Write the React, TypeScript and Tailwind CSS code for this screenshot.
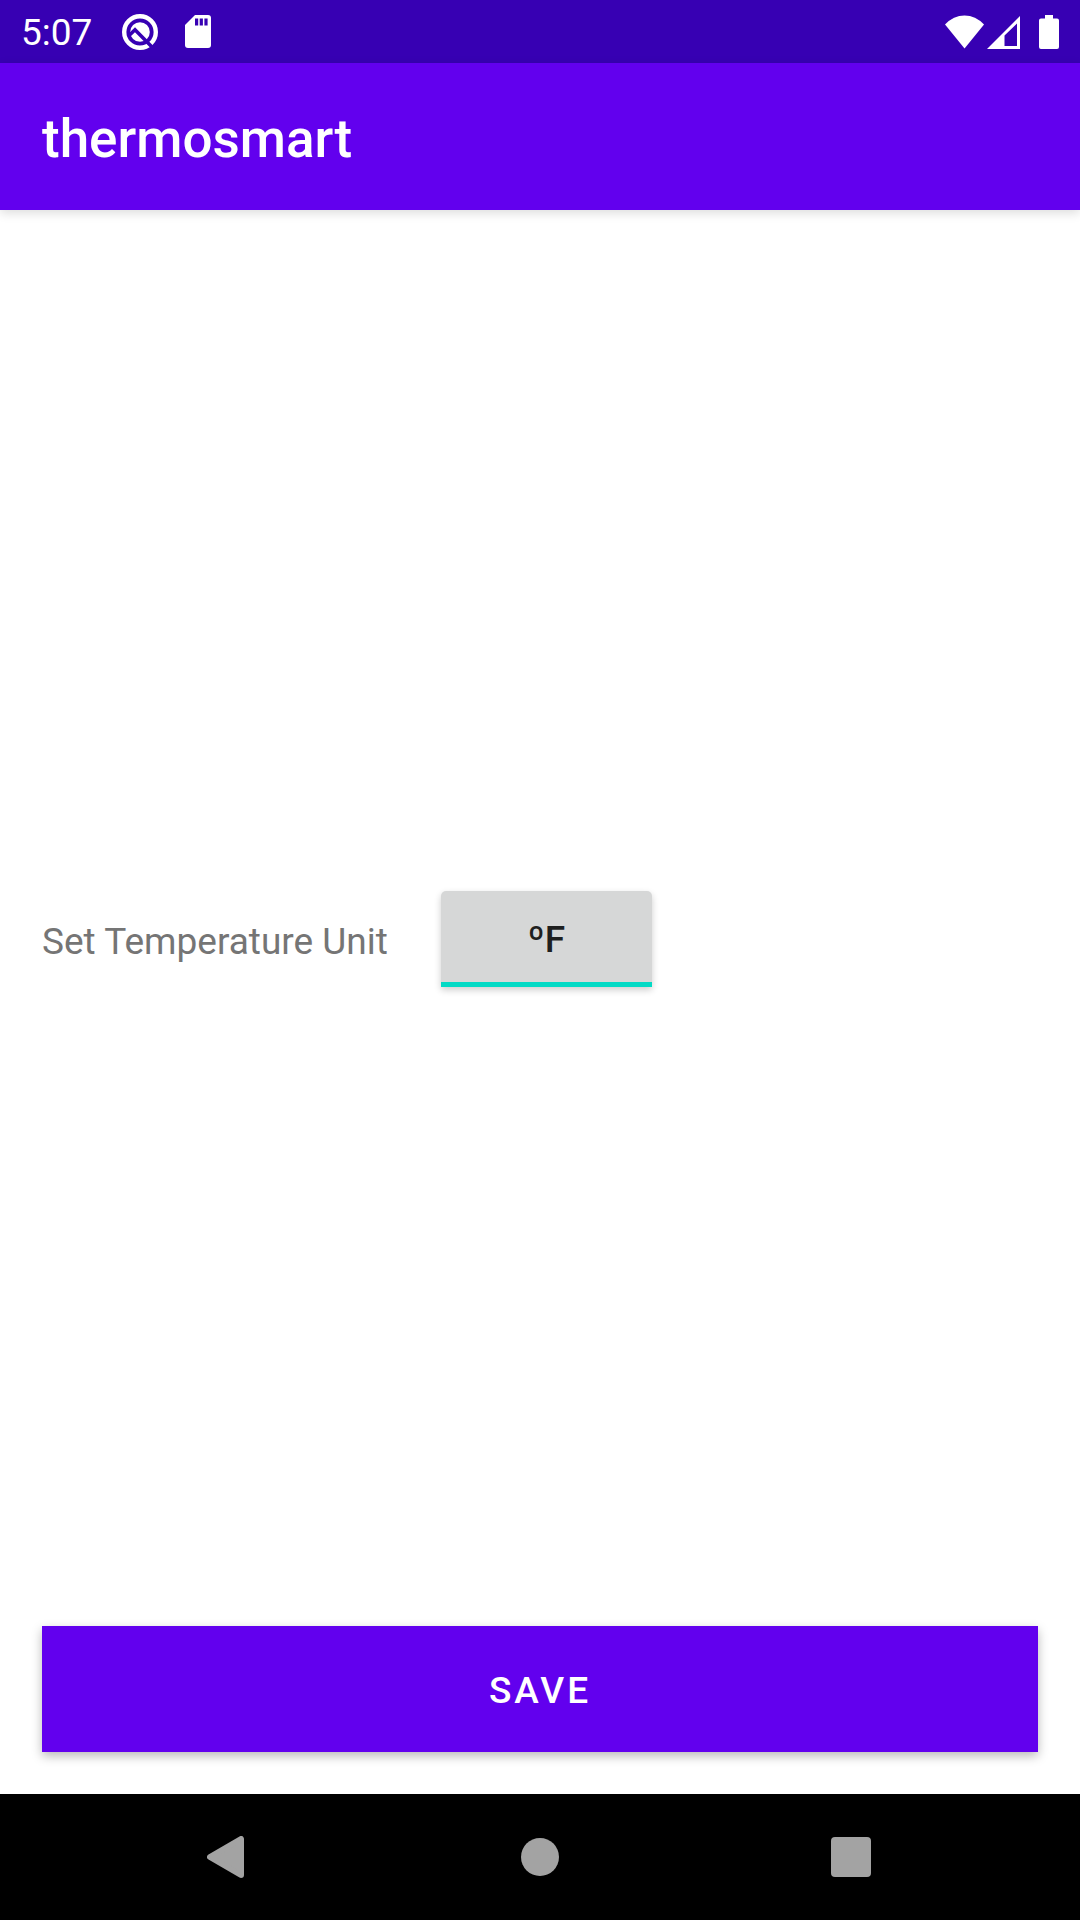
import React from "react";

function StatusBar() {
  return (
    <header className="flex h-[63px] items-center bg-[#3700b3] pl-[21px] pr-[21px] text-white">
      <time className="pt-[3px] text-[37px] leading-[44px]">5:07</time>
      <svg className="ml-[30px] h-9 w-9" viewBox="0 0 36 36" aria-hidden="true">
        <circle cx="18" cy="18" r="15.8" fill="none" stroke="white" strokeWidth="4.4" />
        <circle cx="18" cy="18" r="9.8" fill="white" />
        <path d="M6 22.5 L13 15.8 L30 33" fill="none" stroke="#3700b3" strokeWidth="3.6" />
      </svg>
      <svg className="ml-[27px] h-[33px] w-[26px]" viewBox="0 0 26 33" aria-hidden="true">
        <path d="M10 0H23Q26 0 26 3V30Q26 33 23 33H3Q0 33 0 30V10Z" fill="white" />
        <path d="M10 3.500h3.200v7H10zM14.700 3.500h3.200v7h-3.200zM19.400 3.500h3.200v7h-3.200z" fill="#3700b3" />
      </svg>
      <div className="ml-auto flex items-center">
        <svg className="h-[34px] w-[39px]" viewBox="0 0 39 34" aria-hidden="true">
          <path d="M0 9.500Q8.500 0.500 19.500 0.500T39 9.500L19.500 33.500Z" fill="white" />
        </svg>
        <svg className="ml-[3px] h-[34px] w-[33px]" viewBox="0 0 33 34" aria-hidden="true">
          <path fillRule="evenodd" d="M33 1V34H0ZM30 8.500L17.500 20.500V31H30Z" fill="white" />
        </svg>
        <svg className="ml-[19px] h-[34px] w-5" viewBox="0 0 20 34" aria-hidden="true">
          <path d="M6 0h8v3.500h4q2 0 2 2V32q0 2-2 2H2q-2 0-2-2V5.500q0-2 2-2h4z" fill="white" />
        </svg>
      </div>
    </header>
  );
}

function NavigationBar() {
  return (
    <nav className="flex h-[126px] items-center justify-center gap-[257px] bg-black text-[#a3a3a3]">
      <button type="button" aria-label="Back" className="flex h-[54px] w-[54px] items-center justify-center pr-2">
        <svg className="h-[42px] w-[37px]" viewBox="0 0 37 42" aria-hidden="true">
          <path d="M34 3V39L3 21Z" fill="currentColor" stroke="currentColor" strokeWidth="6" strokeLinejoin="round" />
        </svg>
      </button>
      <button type="button" aria-label="Home" className="flex h-[54px] w-[54px] items-center justify-center">
        <span className="h-[38px] w-[38px] rounded-full bg-current" />
      </button>
      <button type="button" aria-label="Recent apps" className="flex h-[54px] w-[54px] items-center justify-center">
        <span className="h-10 w-10 rounded bg-current" />
      </button>
    </nav>
  );
}

export default function App() {
  const [fahrenheit, setFahrenheit] = React.useState(true);
  return (
    <div className="flex min-h-screen flex-col bg-white font-['Roboto',sans-serif]">
      <StatusBar />
      <div className="flex h-[147px] items-center bg-[#6200ee] px-[42px] pt-1 shadow-[0_3px_10px_rgba(0,0,0,0.14)]">
        <h1 className="text-[53px] font-medium leading-[62px] text-white">thermosmart</h1>
      </div>
      <main className="flex flex-1 flex-col p-[42px]">
        <div className="flex flex-1 items-center gap-[53px]">
          <label htmlFor="unit" className="pt-[6px] text-[37px] leading-[44px] text-[#757575]">
            Set Temperature Unit
          </label>
          <button
            id="unit"
            type="button"
            aria-pressed={fahrenheit}
            onClick={() => setFahrenheit(!fahrenheit)}
            className="h-24 w-[211px] rounded-t-[5px] border-b-[5px] border-[#03dac5] bg-[#d6d7d7] pt-[6px] text-[37px] font-medium leading-[44px] text-[#1e1f1f] shadow-[0_3px_7px_rgba(0,0,0,0.2)]"
          >
            {fahrenheit ? "ºF" : "ºC"}
          </button>
        </div>
        <button
          type="button"
          className="h-[126px] w-full bg-[#6200ee] pt-1 text-[37px] font-medium leading-[44px] tracking-[3px] text-white shadow-[0_4px_10px_rgba(0,0,0,0.28)]"
        >
          SAVE
        </button>
      </main>
      <NavigationBar />
    </div>
  );
}
